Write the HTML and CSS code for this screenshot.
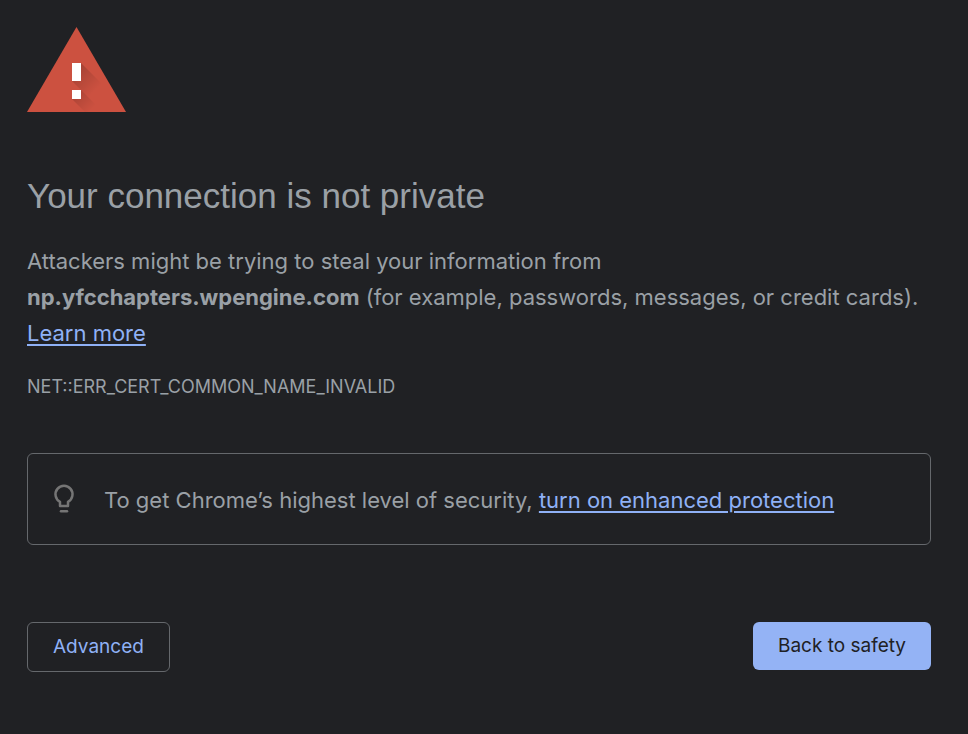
FILE: index.html
```
<!DOCTYPE html>
<html lang="en">
<head>
    <meta charset="UTF-8">
    <meta name="viewport" content="width=device-width, initial-scale=1.0">
    <title>Privacy error</title>
    <link rel="stylesheet" href="styles.css">
</head>
<body>
    <main class="interstitial">
        <svg class="warning-icon" viewBox="0 0 99 85" aria-hidden="true">
            <defs>
                <linearGradient id="markShadow" gradientUnits="userSpaceOnUse" x1="46" y1="42" x2="68" y2="64">
                    <stop offset="0" stop-color="#000" stop-opacity="0.2"/>
                    <stop offset="1" stop-color="#000" stop-opacity="0"/>
                </linearGradient>
                <linearGradient id="dotShadow" gradientUnits="userSpaceOnUse" x1="46" y1="65" x2="64" y2="83">
                    <stop offset="0" stop-color="#000" stop-opacity="0.18"/>
                    <stop offset="1" stop-color="#000" stop-opacity="0"/>
                </linearGradient>
            </defs>
            <path fill="#cc5140" d="M49.500 0 99 85H0z"/>
            <path fill="url(#markShadow)" d="M54 36 84 66 96 85H76L45 54z"/>
            <path fill="url(#dotShadow)" d="M54 63 76 85H58L45 72z"/>
            <path fill="#fff" d="M45 36h9v18h-9zM45 63h9v9h-9z"/>
        </svg>

        <h1>Your connection is not private</h1>
        <p class="message">
            Attackers might be trying to steal your information from
            <strong>np.yfcchapters.wpengine.com</strong> (for example, passwords, messages, or credit cards).
            <a href="#">Learn more</a>
        </p>
        <div class="error-code">NET::ERR_CERT_COMMON_NAME_INVALID</div>

        <div class="protection">
            <svg class="bulb-icon" viewBox="0 0 24 32" aria-hidden="true">
                <path fill="none" stroke="#757575" stroke-width="2.500" stroke-linejoin="round" d="M8 22v-4.200a8.500 8.500 0 1 1 8 0V22z"/>
                <path fill="none" stroke="#757575" stroke-width="2.500" stroke-linecap="round" d="M9 27.200h6"/>
            </svg>
            <p>To get Chrome’s highest level of security, <a href="#">turn on enhanced protection</a></p>
        </div>

        <div class="buttons">
            <button type="button" class="secondary">Advanced</button>
            <button type="button" class="primary">Back to safety</button>
        </div>
    </main>
</body>
</html>
```

FILE: styles.css
```
body {
    margin: 0;
    background-color: #202124;
    color: #9aa0a6;
    font-family: Inter, "Liberation Sans", sans-serif;
    font-size: 22px;
    line-height: 36px;
}
.interstitial {
    padding: 27px 37px 27px 27px;
}
.warning-icon {
    display: block;
    width: 99px;
    height: 85px;
}
h1 {
    margin: 60px 0 23px;
    font-family: "Liberation Sans", Arial, sans-serif;
    font-size: 35px;
    font-weight: 400;
    line-height: 48px;
}
p {
    margin: 0;
}
a {
    color: #8fb1f6;
    text-underline-offset: 3px;
}
.error-code {
    margin-top: 24px;
    font-size: 18px;
    line-height: 24px;
}
.protection {
    display: flex;
    align-items: center;
    gap: 28px;
    margin-top: 54px;
    padding: 28px 24px 26px;
    border: 1px solid #65686c;
    border-radius: 6px;
}
.bulb-icon {
    flex: none;
    width: 24px;
    height: 32px;
}
.buttons {
    display: flex;
    justify-content: space-between;
    align-items: flex-start;
    margin-top: 77px;
}
button {
    padding: 12px 25px;
    border: 0;
    border-radius: 6px;
    font-family: inherit;
    font-size: 19px;
    line-height: 24px;
    cursor: pointer;
}
.primary {
    background-color: #94b3f5;
    color: #202124;
}
.secondary {
    border: 1px solid #65686c;
    background-color: transparent;
    color: #8fb1f6;
}
```
